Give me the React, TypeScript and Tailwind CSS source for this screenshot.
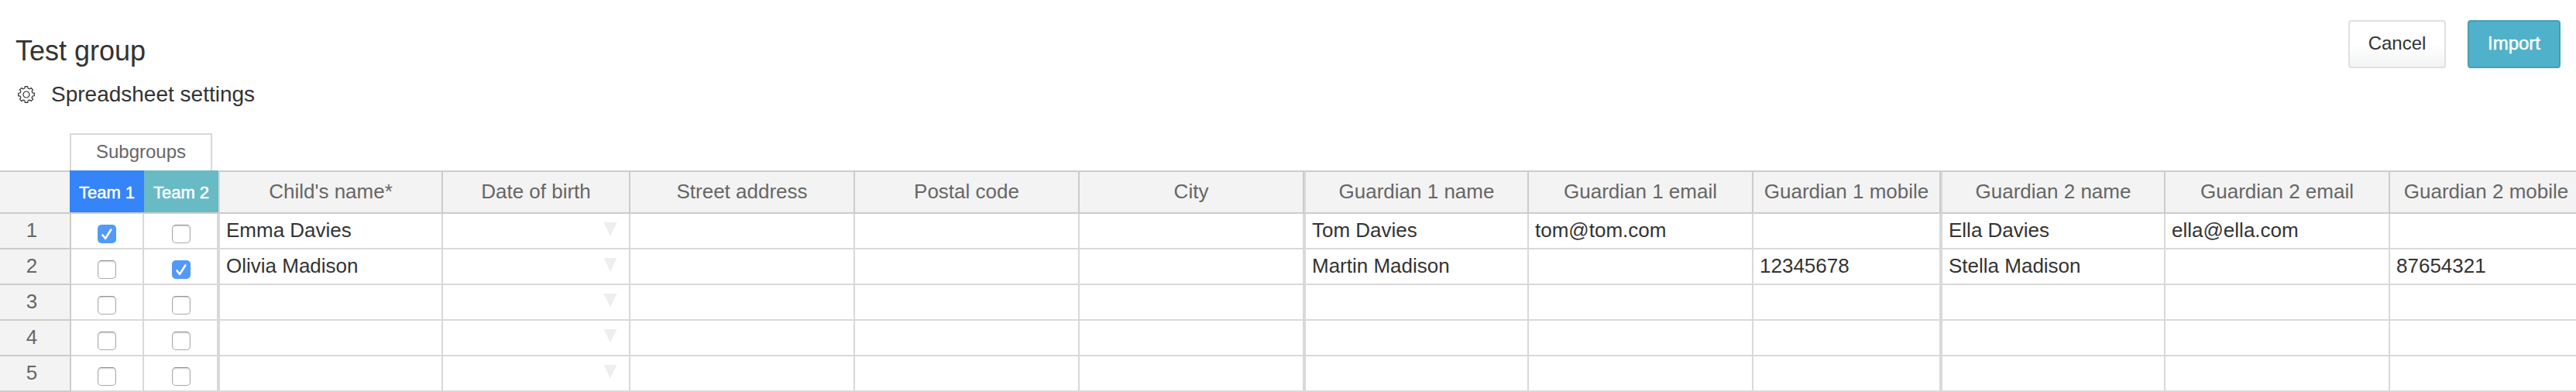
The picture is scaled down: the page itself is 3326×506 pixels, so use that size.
const COLUMNS: { key: string; label: string; size: string }[] = [
  { key: "name", label: "Child's name*", size: "w-[290px] border-l-2" },
  { key: "birth", label: "Date of birth", size: "w-[242px]" },
  { key: "street", label: "Street address", size: "w-[290px]" },
  { key: "postal", label: "Postal code", size: "w-[290px]" },
  { key: "city", label: "City", size: "w-[290px]" },
  { key: "g1name", label: "Guardian 1 name", size: "w-[290px] border-l-2" },
  { key: "g1email", label: "Guardian 1 email", size: "w-[290px]" },
  { key: "g1mobile", label: "Guardian 1 mobile", size: "w-[242px]" },
  { key: "g2name", label: "Guardian 2 name", size: "w-[290px] border-l-2" },
  { key: "g2email", label: "Guardian 2 email", size: "w-[290px]" },
  { key: "g2mobile", label: "Guardian 2 mobile", size: "w-[250px]" },
];

const ROWS: { teams: boolean[]; values: Record<string, string> }[] = [
  { teams: [true, false], values: { name: "Emma Davies", g1name: "Tom Davies", g1email: "tom@tom.com", g2name: "Ella Davies", g2email: "ella@ella.com" } },
  { teams: [false, true], values: { name: "Olivia Madison", g1name: "Martin Madison", g1mobile: "12345678", g2name: "Stella Madison", g2mobile: "87654321" } },
  { teams: [false, false], values: {} },
  { teams: [false, false], values: {} },
  { teams: [false, false], values: {} },
];

const TEETH = [0, 45, 90, 135, 180, 225, 270, 315];

function GearIcon() {
  return (
    <svg className="h-[22px] w-[22px]" viewBox="-11 -11 22 22" fill="none" stroke="#333" strokeWidth="1.2" strokeLinecap="round" strokeLinejoin="round">
      <circle r="4" />
      {TEETH.map(angle => (
        <path key={angle} transform={`rotate(${angle})`} d="M-1.7 -10.3H1.7L2 -8.2Q3 -7.2 4.31 -7.21L6.08 -8.49" />
      ))}
    </svg>
  );
}

function Checkbox({ checked }: { checked: boolean }) {
  if (checked) {
    return (
      <div className="h-6 w-6 rounded-[5px] bg-[#529af8]">
        <svg className="h-6 w-6" viewBox="0 0 24 24" fill="none" stroke="#fff" strokeWidth="2.6" strokeLinecap="round" strokeLinejoin="round">
          <path d="M6.500 13.500l3.700 4.300L17.300 6.500" />
        </svg>
      </div>
    );
  }
  return <div className="h-6 w-6 rounded-[5px] border border-[#ababab] border-t-[#8f8f8f] bg-white shadow-[inset_0_1px_2px_rgba(0,0,0,0.18)]" />;
}

export default function App() {
  return (
    <div className="h-[506px] w-[3326px] overflow-hidden bg-white font-['Liberation_Sans',Arial,sans-serif] text-[#333]">
      {/* Header */}
      <div className="flex h-[172px] items-start justify-between px-5">
        <div>
          <h1 className="pt-[45px] text-4xl leading-[42px]">Test group</h1>
          <div className="mt-[17px] flex items-center pl-[3px]">
            <GearIcon />
            <span className="ml-[21px] text-[28px] leading-9">Spreadsheet settings</span>
          </div>
        </div>
        <div className="flex gap-7 pt-[26px] text-2xl leading-[55px]">
          <button className="h-[62px] w-[126px] rounded-[4px] border-2 border-[#e0e0e0] bg-linear-to-b from-white from-50% to-[#f3f4f4] pb-[3px]">Cancel</button>
          <button className="h-[62px] w-[120px] rounded-[4px] border-2 border-[#469fb4] bg-[#4fb1ca] pb-[3px] text-white [-webkit-text-stroke:0.5px_#fff]">Import</button>
        </div>
      </div>

      {/* Subgroups tab */}
      <div className="ml-[90px] h-12 w-[184px] border-2 border-b-0 border-[#d9d9d9] text-center text-2xl leading-[44px] text-[#666]">Subgroups</div>

      {/* Column headers */}
      <div className="flex h-14 w-[3336px] text-[#666]">
        <div className="w-[90px] border-y-2 border-[#ccc] bg-[#f3f3f3]" />
        <div className="w-[192px] border-b-2 border-[#ccc]">
          <div className="flex h-[54px] text-center text-[22px] leading-[57px] text-white [-webkit-text-stroke:0.5px_#fff]">
            <div className="w-24 bg-[#3584f9]">Team 1</div>
            <div className="w-24 bg-[#68bbc5]">Team 2</div>
          </div>
        </div>
        {COLUMNS.map(col => (
          <div key={col.key} className={`${col.size} shrink-0 border-y-2 border-r-2 border-[#ccc] border-l-[#d9d9d9] bg-[#f3f3f3] text-center text-[26px] leading-[50px]`}>
            {col.label}
          </div>
        ))}
      </div>

      {/* Rows */}
      {ROWS.map((row, i) => (
        <div key={i} className="flex h-[46px] w-[3336px] text-[26px] leading-[43px]">
          <div className="w-[92px] border-r-2 border-b-2 border-[#ccc] bg-[#f3f3f3] pr-2 text-center text-[#666]">{i + 1}</div>
          {row.teams.map((checked, t) => (
            <div key={t} className={`${t === 0 ? "w-[94px]" : "w-24 pl-0.5"} flex justify-center border-r-2 border-b-2 border-[#d9d9d9] pt-[14px]`}>
              <Checkbox checked={checked} />
            </div>
          ))}
          {COLUMNS.map(col => (
            <div key={col.key} className={`${col.size} flex shrink-0 border-r-2 border-b-2 border-[#d9d9d9] pl-2`}>
              {row.values[col.key]}
              {col.key === "birth" && (
                <svg className="mt-[11px] mr-[15px] ml-auto h-[18px] w-[18px]" viewBox="0 0 18 18" fill="#eee">
                  <path d="M0.500 0h17L9 17.500z" />
                </svg>
              )}
            </div>
          ))}
        </div>
      ))}
    </div>
  );
}
